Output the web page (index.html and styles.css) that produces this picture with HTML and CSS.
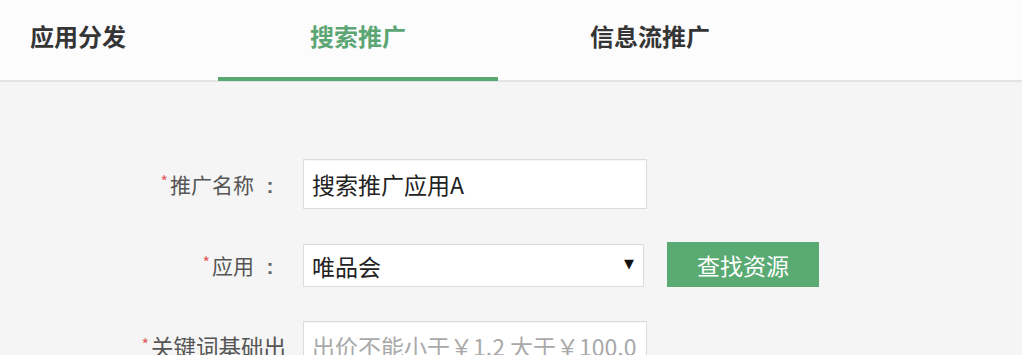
FILE: index.html
```html
<!DOCTYPE html>
<html lang="zh-CN">
<head>
<meta charset="utf-8">
<title>搜索推广</title>
<link rel="stylesheet" href="styles.css">
</head>
<body>
<header class="header">
  <nav class="tabs">
    <a class="tab">应用分发</a>
    <a class="tab tab-active">搜索推广</a>
    <a class="tab">信息流推广</a>
  </nav>
</header>
<main class="form">
  <div class="row">
    <label class="label"><span class="req">*</span>推广名称<span class="colon">:</span></label>
    <div class="field">
      <input class="input" type="text" value="搜索推广应用A">
    </div>
  </div>
  <div class="row row-select">
    <label class="label"><span class="req">*</span>应用<span class="colon">:</span></label>
    <div class="field">
      <div class="select-wrap">
        <select class="select">
          <option>唯品会</option>
        </select>
        <span class="arrow">▼</span>
      </div>
      <button class="btn" type="button">查找资源</button>
    </div>
  </div>
  <div class="row">
    <label class="label label-long"><span class="req">*</span>关键词基础出</label>
    <div class="field">
      <input class="input" type="text" placeholder="出价不能小于￥1.2 大于￥100.0">
    </div>
  </div>
</main>
</body>
</html>
```
FILE: styles.css
```css
* { box-sizing: border-box; }
html, body {
  margin: 0;
  padding: 0;
  background: #f5f5f5;
  font-family: "Noto Sans CJK SC", "Noto Sans", sans-serif;
  overflow: hidden;
}
.header {
  background: #fcfcfd;
  height: 82px;
  border-bottom: 2px solid #e4e4e4;
}
.tabs {
  display: flex;
  margin-left: -62px;
  height: 80px;
}
.tab {
  display: block;
  padding: 0 92px;
  height: 81px;
  line-height: 72px;
  font-size: 24px;
  font-weight: 700;
  color: #353535;
  border-bottom: 4px solid transparent;
  white-space: nowrap;
}
.tab-active {
  color: #5ba672;
  border-bottom-color: #5aa872;
}
.form {
  padding-top: 77px;
}
.row {
  display: grid;
  grid-template-columns: 286px 1fr;
  column-gap: 17px;
  align-items: center;
  margin-bottom: 33px;
}
.row-select {
  margin-bottom: 34px;
}
.label {
  text-align: right;
  font-size: 21px;
  color: #555;
  white-space: nowrap;
}
.label-long {
  font-size: 22.5px;
}
.colon {
  display: inline-block;
  width: 32px;
  text-align: center;
  font-family: "Liberation Sans", sans-serif;
  font-weight: 700;
  color: #666;
}
.req {
  color: #e05a5a;
  font-size: 16px;
  vertical-align: 5px;
  margin-right: 2px;
}
.field {
  display: flex;
  align-items: center;
  gap: 23px;
}
.input {
  width: 344px;
  height: 50px;
  border: 1px solid #dcdcdc;
  background: #fff;
  padding: 0 8px;
  font-family: "Noto Sans CJK SC", "Noto Sans", sans-serif;
  font-size: 23px;
  color: #222;
  outline: none;
  box-shadow: inset 0 1px 1px rgba(0,0,0,0.04);
}
.input::placeholder {
  color: #a9a9a9;
}
.select-wrap {
  position: relative;
  width: 341px;
  height: 43px;
  margin-top: 2px;
}
.select {
  appearance: none;
  -webkit-appearance: none;
  width: 100%;
  height: 100%;
  border: 1px solid #dcdcdc;
  background: #fff;
  border-radius: 0;
  padding: 0 8px;
  font-family: "Noto Sans CJK SC", "Noto Sans", sans-serif;
  font-size: 23px;
  color: #222;
  outline: none;
}
.arrow {
  position: absolute;
  right: 10px;
  top: 12px;
  font-family: "DejaVu Sans", sans-serif;
  font-size: 13px;
  line-height: 16px;
  color: #111;
  pointer-events: none;
}
.btn {
  width: 152px;
  height: 45px;
  border: none;
  background: #5aaa73;
  color: #fff;
  font-family: "Noto Sans CJK SC", "Noto Sans", sans-serif;
  font-size: 23px;
  padding: 0;
  cursor: pointer;
}
```
